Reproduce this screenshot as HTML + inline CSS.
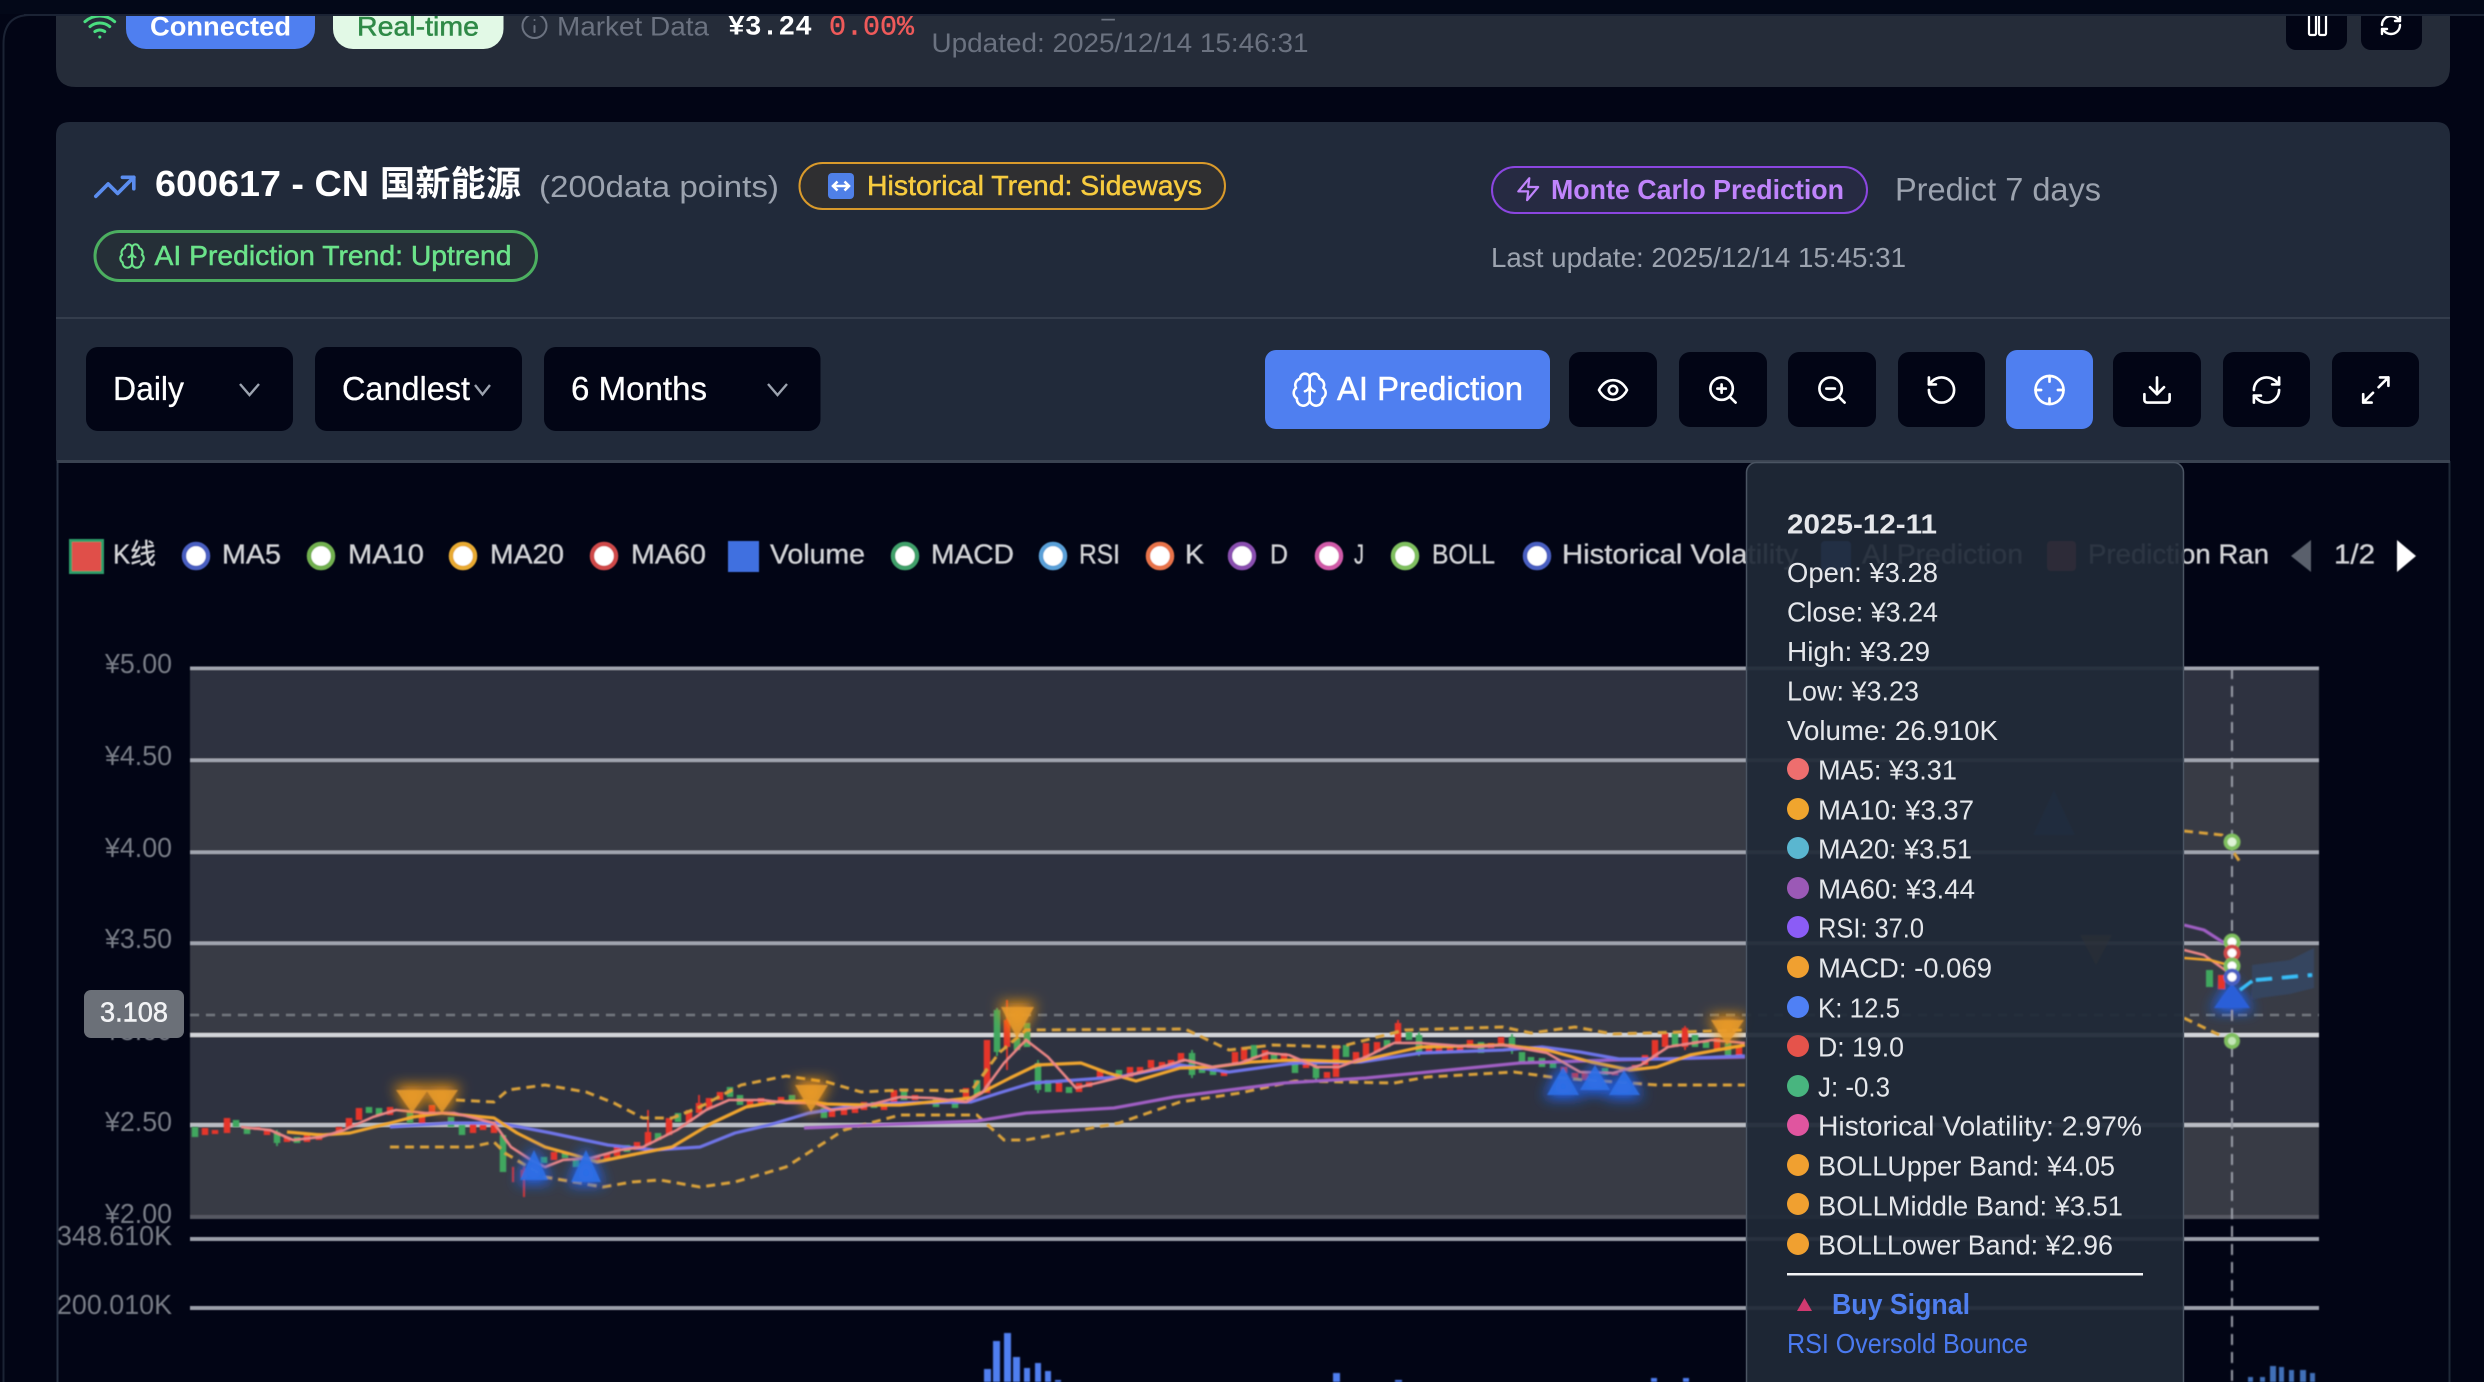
<!DOCTYPE html>
<html><head><meta charset="utf-8"><title>600617 Chart</title>
<style>
html,body{margin:0;padding:0;background:#020515;width:2484px;height:1382px;overflow:hidden}
svg{display:block}
text{font-family:"Liberation Sans","Noto Sans CJK SC",sans-serif;white-space:pre}
.m{font-family:"Liberation Mono","Noto Sans CJK SC",monospace}
.i{fill:none;stroke-linecap:round;stroke-linejoin:round}
.tt{fill:#e5e7eb;font-size:28px}
.lg{fill:#d2d3d6;font-size:28px;stroke:#d2d3d6;stroke-width:.35px}
.ax{fill:#777b85;font-size:28px}
</style></head><body>
<svg width="2484" height="1382" viewBox="0 0 2484 1382" xmlns="http://www.w3.org/2000/svg">
<defs>
<filter id="b1" x="-5%" y="-5%" width="110%" height="110%"><feGaussianBlur stdDeviation="0.9"/></filter>
<filter id="b2" x="-50%" y="-50%" width="200%" height="200%"><feGaussianBlur stdDeviation="7"/></filter>
<filter id="b3" x="-5%" y="-50%" width="110%" height="200%"><feGaussianBlur stdDeviation="0.6"/></filter>
<clipPath id="cp"><rect x="190" y="668" width="2129" height="714"/></clipPath>
</defs>
<rect width="2484" height="1382" fill="#020515"/>
<path d="M3.500 1382V44Q3.500 15 30 15H2484" fill="none" stroke="#1b2334" stroke-width="2"/>
<line x1="2449.500" y1="461" x2="2449.500" y2="1382" stroke="#1f2937" stroke-width="2"/>
<line x1="57.500" y1="461" x2="57.500" y2="1382" stroke="#273142" stroke-width="2"/>

<!-- top card -->
<path d="M56 0H2450V67Q2450 87 2430 87H76Q56 87 56 67Z" fill="#252c39"/>
<g transform="translate(83,9) scale(1.400)" class="i" stroke="#4ade80" stroke-width="2.200"><path d="M5 12.550a11 11 0 0 1 14.080 0"/><path d="M1.420 9a16 16 0 0 1 21.160 0"/><path d="M8.530 16.110a6 6 0 0 1 6.950 0"/><path d="M12 20h.01"/></g>
<rect x="126" y="-8" width="189" height="57" rx="20" fill="#4f7ff0"/>
<text x="150" y="35.500" font-size="27" font-weight="700" fill="#fff" textLength="141" lengthAdjust="spacingAndGlyphs">Connected</text>
<rect x="333" y="-8" width="170.500" height="57" rx="20" fill="#e2f9e6"/>
<text x="357" y="35.500" font-size="27" fill="#2f8a47" stroke="#2f8a47" stroke-width=".5" textLength="122" lengthAdjust="spacingAndGlyphs">Real-time</text>
<g class="i" stroke="#6b7280" stroke-width="2"><circle cx="534.500" cy="26" r="12"/><path d="M534.500 26v6M534.500 20h.01"/></g>
<text x="557" y="35.500" font-size="27" fill="#6b7280" textLength="152" lengthAdjust="spacingAndGlyphs">Market Data</text>
<text class="m" x="728" y="34.500" font-size="28" font-weight="700" fill="#fff" textLength="84" lengthAdjust="spacingAndGlyphs">¥3.24</text>
<text class="m" x="829" y="34.500" font-size="28" fill="#ef5a5a" stroke="#ef5a5a" stroke-width=".4" textLength="85" lengthAdjust="spacingAndGlyphs">0.00%</text>
<text x="933" y="15" font-size="27" fill="#6b7280" textLength="469" lengthAdjust="spacingAndGlyphs">Source: akshare_sanmin realtime feed stocks</text>
<text x="931.500" y="52" font-size="27" fill="#6b7280" textLength="377" lengthAdjust="spacingAndGlyphs">Updated: 2025/12/14 15:46:31</text>
<rect x="2286" y="-10" width="61" height="60" rx="10" fill="#020515"/>
<rect x="2361" y="-10" width="61" height="60" rx="10" fill="#020515"/>
<g class="i" stroke="#fff" stroke-width="2.200"><rect x="2309" y="10" width="7" height="25" rx="1.500"/><rect x="2319" y="10" width="7" height="25" rx="1.500"/></g>
<g transform="translate(2379,13) scale(1)" class="i" stroke="#fff" stroke-width="2.400"><path d="M3 12a9 9 0 0 1 9-9 9.750 9.750 0 0 1 6.740 2.740L21 8"/><path d="M21 3v5h-5"/><path d="M21 12a9 9 0 0 1-9 9 9.750 9.750 0 0 1-6.740-2.740L3 16"/><path d="M8 16H3v5"/></g>

<!-- header top band -->
<rect x="0" y="0" width="2484" height="14" fill="#030818"/>
<rect x="24" y="14" width="2460" height="2" fill="#1b2334"/>

<!-- main card header -->
<path d="M56 461V136Q56 122 70 122H2436Q2450 122 2450 136V461Z" fill="#212a3a"/>
<rect x="56" y="317" width="2394" height="2" fill="#343d4c"/>
<rect x="57" y="460" width="2393" height="3" fill="#3a4351"/>
<g transform="translate(92,164) scale(1.900)" class="i" stroke="#5b8def" stroke-width="1.900"><path d="M22 7 13.500 15.500 8.500 10.500 2 17"/><path d="M16 7h6v6"/></g>
<text x="155" y="196" font-size="36" font-weight="700" fill="#fff" textLength="214" lengthAdjust="spacingAndGlyphs">600617 - CN</text>
<text x="380" y="196" font-size="35" font-weight="700" fill="#fff" textLength="141" lengthAdjust="spacing">国新能源</text>
<text x="539" y="197" font-size="31" fill="#9ca3af" textLength="240" lengthAdjust="spacingAndGlyphs">(200data points)</text>

<rect x="799.500" y="163" width="425.500" height="46" rx="23" fill="#2f2f31" stroke="#d99a2b" stroke-width="2"/>
<rect x="828" y="173" width="26" height="26" rx="4" fill="#4f80e8"/>
<path d="M834 186h14M837.500 181.500l-4.500 4.500 4.500 4.500M844.500 181.500l4.500 4.500-4.500 4.500" stroke="#fff" stroke-width="2.600" fill="none"/>
<text x="867" y="195" font-size="28" fill="#f7cb3f" stroke="#f7cb3f" stroke-width=".5" textLength="335" lengthAdjust="spacingAndGlyphs">Historical Trend: Sideways</text>

<rect x="95" y="231.500" width="441.500" height="49" rx="24.500" fill="#252f37" stroke="#4caf60" stroke-width="3"/>
<g transform="translate(118,242) scale(1.170)" class="i" stroke="#6be38a" stroke-width="1.800"><path d="M12 5a3 3 0 1 0-5.997.125 4 4 0 0 0-2.526 5.770 4 4 0 0 0 .556 6.588A4 4 0 1 0 12 18Z"/><path d="M12 5a3 3 0 1 1 5.997.125 4 4 0 0 1 2.526 5.770 4 4 0 0 1-.556 6.588A4 4 0 1 1 12 18Z"/><path d="M15 13a4.500 4.500 0 0 1-3-4 4.500 4.500 0 0 1-3 4"/></g>
<text x="154.500" y="265" font-size="28" fill="#6be38a" stroke="#6be38a" stroke-width=".5" textLength="357" lengthAdjust="spacingAndGlyphs">AI Prediction Trend: Uptrend</text>

<rect x="1492" y="167" width="375" height="46" rx="23" fill="#262a42" stroke="#8b46e0" stroke-width="2"/>
<g transform="translate(1515,176) scale(1.100)" class="i" stroke="#c084fc" stroke-width="2"><path d="M13 2 3 14h9l-1 8 10-12h-9l1-8z"/></g>
<text x="1551" y="199" font-size="28" font-weight="700" fill="#c084fc" textLength="293" lengthAdjust="spacingAndGlyphs">Monte Carlo Prediction</text>
<text x="1895" y="200.500" font-size="32" fill="#9ca3af" textLength="206" lengthAdjust="spacingAndGlyphs">Predict 7 days</text>
<text x="1491" y="267" font-size="28" fill="#9ca3af" textLength="415" lengthAdjust="spacingAndGlyphs">Last update: 2025/12/14 15:45:31</text>

<!-- selects -->
<rect x="86" y="347" width="207" height="84" rx="12" fill="#020515"/>
<rect x="315" y="347" width="207" height="84" rx="12" fill="#020515"/>
<rect x="544" y="347" width="276.500" height="84" rx="12" fill="#020515"/>
<g fill="#fff" stroke="#fff" stroke-width=".3" font-size="33">
<text x="113" y="400" textLength="71" lengthAdjust="spacingAndGlyphs">Daily</text>
<text x="342" y="400" textLength="128" lengthAdjust="spacingAndGlyphs">Candlest</text>
<text x="571" y="400" textLength="136" lengthAdjust="spacingAndGlyphs">6 Months</text>
</g>
<g fill="none" stroke="#9ca3af" stroke-width="2.400"><path d="M240 384l9.500 11 9.500-11"/><path d="M475 385l7.500 9.500 7.500-9.500"/><path d="M768 384l9.500 11 9.500-11"/></g>

<!-- toolbar -->
<rect x="1265" y="350" width="285" height="79" rx="11" fill="#4f7ff0"/>
<g transform="translate(1290.500,370.500) scale(1.600)" class="i" stroke="#fff" stroke-width="1.600"><path d="M12 5a3 3 0 1 0-5.997.125 4 4 0 0 0-2.526 5.770 4 4 0 0 0 .556 6.588A4 4 0 1 0 12 18Z"/><path d="M12 5a3 3 0 1 1 5.997.125 4 4 0 0 1 2.526 5.770 4 4 0 0 1-.556 6.588A4 4 0 1 1 12 18Z"/><path d="M15 13a4.500 4.500 0 0 1-3-4 4.500 4.500 0 0 1-3 4"/></g>
<text x="1337" y="400" font-size="33" fill="#fff" stroke="#fff" stroke-width=".5" textLength="186" lengthAdjust="spacingAndGlyphs">AI Prediction</text>
<g fill="#020515">
<rect x="1569" y="352" width="88" height="75" rx="11"/><rect x="1679" y="352" width="88" height="75" rx="11"/><rect x="1788" y="352" width="88" height="75" rx="11"/><rect x="1898" y="352" width="87" height="75" rx="11"/><rect x="2113" y="352" width="88" height="75" rx="11"/><rect x="2223" y="352" width="87" height="75" rx="11"/><rect x="2332" y="352" width="87" height="75" rx="11"/>
</g>
<rect x="2006" y="350" width="87" height="79" rx="11" fill="#4f7ff0"/>
<g class="i" stroke="#fff" stroke-width="1.900">
<g transform="translate(1596.200,373.200) scale(1.400)"><path d="M2 12s3-7 10-7 10 7 10 7-3 7-10 7-10-7-10-7Z"/><circle cx="12" cy="12" r="3"/></g>
<g transform="translate(1706.200,373.200) scale(1.400)"><circle cx="11" cy="11" r="8"/><path d="M21 21l-4.350-4.350M11 8v6M8 11h6"/></g>
<g transform="translate(1815.200,373.200) scale(1.400)"><circle cx="11" cy="11" r="8"/><path d="M21 21l-4.350-4.350M8 11h6"/></g>
<g transform="translate(1924.700,373.200) scale(1.400)"><path d="M3 12a9 9 0 1 0 9-9 9.750 9.750 0 0 0-6.740 2.740L3 8"/><path d="M3 3v5h5"/></g>
<g transform="translate(2032.700,373.200) scale(1.400)"><circle cx="12" cy="12" r="10"/><path d="M22 12h-4M6 12H2M12 6V2M12 22v-4"/></g>
<g transform="translate(2140.200,373.200) scale(1.400)"><path d="M21 15v4a2 2 0 0 1-2 2H5a2 2 0 0 1-2-2v-4"/><path d="M7 10l5 5 5-5"/><path d="M12 15V3"/></g>
<g transform="translate(2249.700,373.200) scale(1.400)"><path d="M3 12a9 9 0 0 1 9-9 9.750 9.750 0 0 1 6.740 2.740L21 8"/><path d="M21 3v5h-5"/><path d="M21 12a9 9 0 0 1-9 9 9.750 9.750 0 0 1-6.740-2.740L3 16"/><path d="M8 16H3v5"/></g>
<g transform="translate(2359,373.200) scale(1.400)"><path d="M21 3l-7 7M3 21l7-7M15 3h6v6M9 21H3v-6"/></g>
</g>

<!-- legend -->
<g filter="url(#b3)">
<rect x="70.500" y="540.500" width="32" height="32" fill="#e04f4a" stroke="#2f9e6a" stroke-width="3"/>
<text class="lg" x="113" y="563.500" textLength="43" lengthAdjust="spacingAndGlyphs">K线</text>
<g fill="#fff" stroke-width="4.500">
<circle cx="196" cy="556" r="12" stroke="#4a5fc1"/><circle cx="321" cy="556" r="12" stroke="#72b04f"/><circle cx="463" cy="556" r="12" stroke="#e8aa30"/><circle cx="604" cy="556" r="12" stroke="#cf4a4a"/>
<circle cx="905" cy="556" r="12" stroke="#3fa06a"/><circle cx="1053" cy="556" r="12" stroke="#5aa0d8"/><circle cx="1160" cy="556" r="12" stroke="#e8734a"/><circle cx="1242" cy="556" r="12" stroke="#8a4fb0"/><circle cx="1329" cy="556" r="12" stroke="#d05aa8"/><circle cx="1405" cy="556" r="12" stroke="#7fbf5f"/><circle cx="1537" cy="556" r="12" stroke="#4a5fc1"/>
</g>
<rect x="728" y="541" width="31" height="31" fill="#3f6fe0"/>
<text class="lg" x="222" y="563.500" textLength="59" lengthAdjust="spacingAndGlyphs">MA5</text>
<text class="lg" x="348" y="563.500" textLength="76" lengthAdjust="spacingAndGlyphs">MA10</text>
<text class="lg" x="490" y="563.500" textLength="74" lengthAdjust="spacingAndGlyphs">MA20</text>
<text class="lg" x="631" y="563.500" textLength="75" lengthAdjust="spacingAndGlyphs">MA60</text>
<text class="lg" x="770" y="563.500" textLength="95" lengthAdjust="spacingAndGlyphs">Volume</text>
<text class="lg" x="931" y="563.500" textLength="83" lengthAdjust="spacingAndGlyphs">MACD</text>
<text class="lg" x="1079" y="563.500" textLength="41" lengthAdjust="spacingAndGlyphs">RSI</text>
<text class="lg" x="1185" y="563.500" textLength="19" lengthAdjust="spacingAndGlyphs">K</text>
<text class="lg" x="1270" y="563.500" textLength="18" lengthAdjust="spacingAndGlyphs">D</text>
<text class="lg" x="1354" y="563.500" textLength="10" lengthAdjust="spacingAndGlyphs">J</text>
<text class="lg" x="1432" y="563.500" textLength="63" lengthAdjust="spacingAndGlyphs">BOLL</text>
<text class="lg" x="1562" y="563.500" textLength="236" lengthAdjust="spacingAndGlyphs">Historical Volatility</text>
<rect x="1821" y="541" width="30" height="30" rx="4" fill="#4f7ff0"/>
<text class="lg" x="1862" y="563.500" textLength="161" lengthAdjust="spacingAndGlyphs">AI Prediction</text>
<rect x="2047" y="541" width="29" height="30" rx="4" fill="#e04f4a"/>
<text class="lg" x="2088" y="563.500" textLength="181" lengthAdjust="spacingAndGlyphs">Prediction Ran</text>
<path d="M2311 540v32l-20-16z" fill="#5a606c"/>
<text class="lg" x="2334" y="563.500" textLength="41" lengthAdjust="spacingAndGlyphs">1/2</text>
<path d="M2397 540v32l19-16z" fill="#fff"/>
</g>

<!-- chart -->
<g filter="url(#b3)">
<rect x="190" y="668" width="2129" height="92" fill="#2e3340"/>
<rect x="190" y="760" width="2129" height="92" fill="#383a44"/>
<rect x="190" y="852" width="2129" height="91" fill="#2e3340"/>
<rect x="190" y="943" width="2129" height="92" fill="#373a44"/>
<rect x="190" y="1035" width="2129" height="90" fill="#2e3340"/>
<rect x="190" y="1125" width="2129" height="92" fill="#373a44"/>
<g fill="#a0a4af">
<rect x="190" y="666.500" width="2129" height="3.500"/><rect x="190" y="758.500" width="2129" height="3.500"/><rect x="190" y="850.500" width="2129" height="3.500"/><rect x="190" y="941.500" width="2129" height="3.500"/>
<rect x="190" y="1033" width="2129" height="4" fill="#d2d4d9"/><rect x="190" y="1123" width="2129" height="4" fill="#b9bcc3"/>
<rect x="190" y="1215" width="2129" height="4" fill="#565962"/><rect x="190" y="1237" width="2129" height="4" fill="#9a9ea8"/><rect x="190" y="1306" width="2129" height="4" fill="#9a9ea8"/>
</g>
<line x1="190" y1="1015" x2="2319" y2="1015" stroke="#70747c" stroke-width="2.500" stroke-dasharray="9 7"/>
</g>
<g class="ax" filter="url(#b3)">
<text x="105" y="673" textLength="67" lengthAdjust="spacingAndGlyphs">¥5.00</text>
<text x="105" y="765" textLength="67" lengthAdjust="spacingAndGlyphs">¥4.50</text>
<text x="105" y="857" textLength="67" lengthAdjust="spacingAndGlyphs">¥4.00</text>
<text x="105" y="948" textLength="67" lengthAdjust="spacingAndGlyphs">¥3.50</text>
<text x="105" y="1040" textLength="67" lengthAdjust="spacingAndGlyphs">¥3.00</text>
<text x="105" y="1131" textLength="67" lengthAdjust="spacingAndGlyphs">¥2.50</text>
<text x="105" y="1223" textLength="67" lengthAdjust="spacingAndGlyphs">¥2.00</text>
<text x="57" y="1245" textLength="115" lengthAdjust="spacingAndGlyphs">348.610K</text>
<text x="57" y="1314" textLength="115" lengthAdjust="spacingAndGlyphs">200.010K</text>
</g>
<rect x="84" y="990" width="100" height="48" rx="7" fill="#6b7078"/>
<text x="100" y="1021.500" font-size="28" fill="#f2f3f5" stroke="#f2f3f5" stroke-width=".5" textLength="68" lengthAdjust="spacingAndGlyphs">3.108</text>

<g filter="url(#b1)" clip-path="url(#cp)">
<!-- volume -->
<g fill="#4f7ff0">
<rect x="984" y="1369" width="7" height="13"/><rect x="993" y="1341" width="7" height="41"/><rect x="1004" y="1333" width="7" height="49"/><rect x="1013" y="1357" width="7" height="25"/><rect x="1024" y="1368" width="6" height="14"/><rect x="1035" y="1363" width="6" height="19"/><rect x="1045" y="1371" width="6" height="11"/><rect x="1055" y="1380" width="6" height="2"/>
<rect x="1333" y="1373" width="7" height="9"/><rect x="1395" y="1380" width="7" height="2"/><rect x="1651" y="1378" width="6" height="4"/><rect x="1683" y="1378" width="6" height="4"/>
<rect x="2248" y="1377" width="5" height="5" fill="#3f6fb8"/><rect x="2260" y="1377" width="5" height="5" fill="#3f6fb8"/><rect x="2270" y="1366" width="6" height="16" fill="#3f6fb8"/><rect x="2279" y="1367" width="5" height="15" fill="#3f6fb8"/><rect x="2289" y="1370" width="5" height="12" fill="#3f6fb8"/><rect x="2300" y="1370" width="6" height="12" fill="#3f6fb8"/><rect x="2310" y="1373" width="5" height="9" fill="#3f6fb8"/>
</g>
<!-- wicks -->
<path d="M513 1167V1182M524 1167V1197M648 1110V1132M1007 1000V1070M699 1095V1103M1398 1020V1043M987 1040V1090M1685 1026V1050" stroke="#e5352b" stroke-width="1.800" fill="none"/>
<path d="M277 1130V1146M997 1008V1056M1038 1060V1093M1192 1050V1078M1316 1064V1082M1419 1032V1056M1512 1034V1054" stroke="#3fa75f" stroke-width="1.800" fill="none"/>
<!-- red candles -->
<path fill="none" stroke="#e5352b" stroke-width="6.500" d="M205 1128V1135M215 1130V1134M227 1118V1133M257 1127V1130M267 1130V1135M287 1137V1142M307 1135V1142M319 1133V1140M339 1127V1133M349 1118V1128M359 1108V1120M390 1107V1115M422 1113V1123M432 1105V1113M473 1123V1133M483 1125V1130M494 1125V1133M524 1170V1178M554 1152V1160M597 1157V1163M607 1153V1160M617 1147V1156M637 1142V1150M648 1132V1145M669 1118V1135M689 1110V1122M699 1103V1113M709 1098V1108M720 1092V1100M750 1100V1107M761 1098V1103M781 1097V1103M832 1110V1117M844 1108V1115M855 1107V1113M864 1102V1110M884 1103V1110M894 1090V1103M915 1095V1100M966 1088V1100M987 1040V1093M1007 1020V1047M1059 1083V1092M1079 1083V1092M1089 1082V1087M1100 1070V1078M1130 1067V1077M1140 1067V1072M1151 1060V1068M1162 1062V1067M1171 1060V1065M1181 1053V1062M1224 1070V1076M1235 1052V1065M1244 1047V1060M1265 1050V1060M1284 1053V1062M1306 1063V1068M1327 1072V1078M1336 1045V1077M1356 1052V1060M1366 1043V1057M1377 1042V1052M1398 1023V1043M1429 1045V1052M1439 1045V1052M1450 1047V1052M1460 1047V1053M1470 1040V1048M1491 1043V1048M1501 1037V1045M1564 1067V1073M1575 1073V1078M1585 1073V1080M1615 1072V1075M1635 1065V1070M1645 1055V1065M1655 1040V1058M1665 1033V1047M1685 1028V1047M1717 1038V1050M1739 1047V1055"/>
<!-- green candles -->
<path fill="none" stroke="#3fa75f" stroke-width="6.500" d="M195 1127V1137M236 1120V1127M247 1127V1134M277 1132V1143M297 1137V1143M369 1107V1113M379 1108V1115M410 1110V1123M451 1117V1127M462 1125V1135M503 1135V1172M544 1157V1163M565 1152V1158M576 1158V1167M627 1145V1152M658 1133V1140M678 1113V1122M730 1087V1097M740 1095V1105M772 1100V1105M792 1095V1100M824 1108V1118M874 1102V1108M904 1090V1100M936 1098V1107M955 1100V1108M977 1080V1095M997 1010V1052M1017 1038V1050M1027 1023V1047M1038 1063V1090M1048 1080V1092M1069 1087V1093M1119 1070V1078M1192 1053V1075M1202 1067V1073M1213 1070V1075M1254 1045V1058M1274 1053V1060M1295 1063V1073M1316 1067V1078M1346 1045V1057M1387 1040V1047M1409 1032V1040M1419 1035V1053M1481 1042V1053M1512 1037V1050M1522 1052V1062M1531 1057V1062M1542 1058V1067M1553 1063V1068M1605 1068V1075M1675 1033V1047M1695 1035V1047M1706 1042V1048M1728 1043V1055"/>
<!-- boll -->
<g fill="none" stroke="#d9a13a" stroke-width="3" stroke-dasharray="9 6">
<polyline points="456,1100 494,1102 508,1090 545,1085 586,1092 614,1103 643,1118 672,1118 700,1107 741,1085 786,1076 827,1082 861,1092 900,1090 971,1091 999,1053 1026,1030 1185,1029 1229,1050 1273,1045 1339,1047 1405,1030 1503,1027 1531,1033 1575,1027 1613,1034 1745,1030"/>
<polyline points="2184,831 2222,835 2240,862"/>
<polyline points="390,1147 471,1147 494,1142 505,1153 545,1177 603,1187 632,1182 660,1180 700,1187 735,1182 786,1167 844,1130 900,1115 977,1115 1004,1140 1026,1140 1119,1123 1180,1102 1240,1093 1295,1081 1394,1083 1427,1077 1514,1072 1558,1078 1657,1085 1745,1085"/>
<polyline points="2184,1018 2232,1041"/>
</g>
<!-- MA lines -->
<g fill="none" stroke-width="3.200" stroke-linejoin="round">
<polyline stroke="#a05fc4" points="804,1128 900,1124 977,1121 1026,1113 1114,1108 1174,1097 1284,1083 1366,1078 1449,1070 1520,1063 1613,1060 1745,1057"/>
<polyline stroke="#a05fc4" points="2184,925 2204,930 2232,948"/>
<polyline stroke="#6f74e8" points="390,1127 448,1123 499,1123 551,1133 608,1145 654,1150 700,1147 735,1133 769,1125 809,1113 861,1105 900,1103 971,1102 999,1093 1032,1083 1076,1080 1119,1077 1180,1065 1229,1072 1295,1063 1361,1062 1421,1053 1503,1050 1542,1047 1580,1052 1619,1059 1668,1059 1745,1056"/>
<polyline stroke="#f0a52e" points="287,1132 321,1135 350,1133 390,1123 413,1117 442,1113 494,1118 517,1133 545,1147 574,1155 597,1162 631,1155 672,1147 712,1123 746,1107 775,1102 804,1101 827,1104 867,1105 900,1105 971,1098 1010,1078 1037,1065 1081,1063 1108,1073 1136,1081 1180,1068 1213,1067 1251,1062 1295,1060 1355,1062 1394,1053 1421,1047 1503,1045 1547,1050 1591,1062 1630,1070 1657,1067 1690,1055 1745,1045"/>
<polyline stroke="#ea8585" stroke-width="2.600" points="241,1127 270,1130 293,1140 321,1137 344,1130 373,1117 396,1110 425,1113 454,1113 494,1123 511,1147 531,1160 545,1167 563,1160 591,1158 620,1150 643,1147 677,1130 706,1110 729,1100 763,1100 786,1103 815,1103 832,1110 861,1107 900,1097 933,1098 966,1102 982,1093 1004,1063 1026,1040 1048,1057 1076,1088 1097,1083 1130,1075 1158,1068 1185,1060 1213,1067 1240,1063 1268,1053 1289,1055 1317,1067 1339,1067 1366,1057 1394,1043 1421,1043 1476,1047 1503,1045 1547,1053 1580,1072 1613,1073 1641,1065 1668,1047 1712,1040 1745,1043"/>
<polyline stroke="#ea8585" stroke-width="2.600" points="2184,950 2204,955 2232,975"/>
<polyline stroke="#f0a52e" stroke-width="2.600" points="2184,958 2210,960 2232,966"/>
</g>
<!-- faint series beneath tooltip -->
<path fill="#2f6fe6" fill-opacity=".5" d="M2054 790 2075 835H2033Z"/>
<path fill="#e69a2d" fill-opacity=".5" d="M2080 935H2112L2096 965Z"/>
<!-- glow -->
<g filter="url(#b2)">
<path fill="#ff9d10" d="M394 1086H430L412 1116ZM424 1086H460L442 1116ZM793 1081H830L811 1115ZM999 1003H1036L1017 1041ZM1709 1016H1746L1727 1048Z"/>
<path fill="#1f66ff" d="M534 1146 551 1183H517ZM586 1146 604 1185H568ZM1563 1063 1582 1098H1544ZM1595 1061 1613 1093H1577ZM1624 1066 1643 1098H1606ZM2232 979 2253 1011H2211Z"/>
</g>
<path fill="#e69a2d" fill-opacity=".85" d="M396 1090H428L412 1113ZM426 1090H458L442 1113ZM795 1085H828L811 1112ZM1001 1007H1034L1017 1038ZM1711 1020H1744L1727 1045Z"/>
<path fill="#2f6fe6" fill-opacity=".9" d="M534 1150 548 1180H520ZM586 1150 601 1182H571ZM1563 1067 1579 1095H1547ZM1595 1065 1610 1090H1580ZM1624 1070 1640 1095H1609Z"/>
<!-- right side -->
<line x1="2232" y1="668" x2="2232" y2="1382" stroke="#9ca0aa" stroke-width="2" stroke-dasharray="11 7"/>
<path fill="#35455e" d="M2252 965 2290 960 2314 948V988L2290 994 2252 999Z"/>
<polyline fill="none" stroke="#38bdf8" stroke-width="3.500" points="2240,990 2252,981"/>
<line x1="2256" y1="980" x2="2312" y2="975" stroke="#38bdf8" stroke-width="3.500" stroke-dasharray="16 10"/>
<path fill="#3fa75f" d="M2206 970h7v17h-7z"/><path fill="#e5352b" d="M2218 975h7v14h-7z"/>
<path fill="#2a5fd8" d="M2232 983 2250 1008H2214Z"/>
<g stroke-width="4">
<circle cx="2232" cy="842" r="6.500" fill="#dff3d6" stroke="#7fbf5f"/>
<circle cx="2232" cy="942" r="6.500" fill="#fff" stroke="#7fbf5f"/>
<circle cx="2232" cy="953" r="6.500" fill="#fff" stroke="#cf4a4a"/>
<circle cx="2232" cy="966" r="6.500" fill="#fff" stroke="#7fbf5f"/>
<circle cx="2232" cy="977" r="6.500" fill="#fff" stroke="#4a5fc1"/>
<circle cx="2232" cy="1041" r="6" fill="#c3e5b6" stroke="#7fbf5f"/>
</g>
</g>

<!-- tooltip -->
<rect x="1746.500" y="462.500" width="437" height="940" rx="10" fill="#1f2937" fill-opacity=".93" stroke="#4b5563" stroke-width="1.500"/>
<text x="1787" y="533.500" font-size="28" font-weight="700" fill="#e5e7eb" textLength="150" lengthAdjust="spacingAndGlyphs">2025-12-11</text>
<g class="tt">
<text x="1787" y="582" textLength="151" lengthAdjust="spacingAndGlyphs">Open: ¥3.28</text>
<text x="1787" y="621.500" textLength="151" lengthAdjust="spacingAndGlyphs">Close: ¥3.24</text>
<text x="1787" y="661" textLength="143" lengthAdjust="spacingAndGlyphs">High: ¥3.29</text>
<text x="1787" y="700.500" textLength="132" lengthAdjust="spacingAndGlyphs">Low: ¥3.23</text>
<text x="1787" y="740" textLength="211" lengthAdjust="spacingAndGlyphs">Volume: 26.910K</text>
<text x="1818" y="779.500" textLength="139" lengthAdjust="spacingAndGlyphs">MA5: ¥3.31</text>
<text x="1818" y="819.500" textLength="156" lengthAdjust="spacingAndGlyphs">MA10: ¥3.37</text>
<text x="1818" y="858.500" textLength="154" lengthAdjust="spacingAndGlyphs">MA20: ¥3.51</text>
<text x="1818" y="898.500" textLength="157" lengthAdjust="spacingAndGlyphs">MA60: ¥3.44</text>
<text x="1818" y="937.500" textLength="106" lengthAdjust="spacingAndGlyphs">RSI: 37.0</text>
<text x="1818" y="977.500" textLength="174" lengthAdjust="spacingAndGlyphs">MACD: -0.069</text>
<text x="1818" y="1017.500" textLength="82" lengthAdjust="spacingAndGlyphs">K: 12.5</text>
<text x="1818" y="1056.500" textLength="86" lengthAdjust="spacingAndGlyphs">D: 19.0</text>
<text x="1818" y="1096.500" textLength="72" lengthAdjust="spacingAndGlyphs">J: -0.3</text>
<text x="1818" y="1135.500" textLength="324" lengthAdjust="spacingAndGlyphs">Historical Volatility: 2.97%</text>
<text x="1818" y="1175.500" textLength="297" lengthAdjust="spacingAndGlyphs">BOLLUpper Band: ¥4.05</text>
<text x="1818" y="1215.500" textLength="305" lengthAdjust="spacingAndGlyphs">BOLLMiddle Band: ¥3.51</text>
<text x="1818" y="1254.500" textLength="295" lengthAdjust="spacingAndGlyphs">BOLLLower Band: ¥2.96</text>
</g>
<circle cx="1798" cy="769" r="11" fill="#ee6e6e"/><circle cx="1798" cy="809" r="11" fill="#f0a52e"/><circle cx="1798" cy="848" r="11" fill="#5ab6d0"/><circle cx="1798" cy="888" r="11" fill="#9b59b6"/><circle cx="1798" cy="927" r="11" fill="#8b5cf6"/><circle cx="1798" cy="967" r="11" fill="#f0a030"/><circle cx="1798" cy="1007" r="11" fill="#4f80f5"/><circle cx="1798" cy="1046" r="11" fill="#e5534b"/><circle cx="1798" cy="1086" r="11" fill="#48b57f"/><circle cx="1798" cy="1125" r="11" fill="#e0559f"/><circle cx="1798" cy="1165" r="11" fill="#f0a030"/><circle cx="1798" cy="1204" r="11" fill="#f0a030"/><circle cx="1798" cy="1244" r="11" fill="#f0a030"/>
<rect x="1787" y="1273" width="356" height="2.500" fill="#f3f4f6"/>
<path d="M1804.500 1298 1812 1311H1797Z" fill="#d03a70"/>
<text x="1832" y="1314" font-size="29" font-weight="700" fill="#4f7ff0" textLength="138" lengthAdjust="spacingAndGlyphs">Buy Signal</text>
<text x="1787" y="1353" font-size="28" fill="#4a7af0" textLength="241" lengthAdjust="spacingAndGlyphs">RSI Oversold Bounce</text>
</svg>
</body></html>
